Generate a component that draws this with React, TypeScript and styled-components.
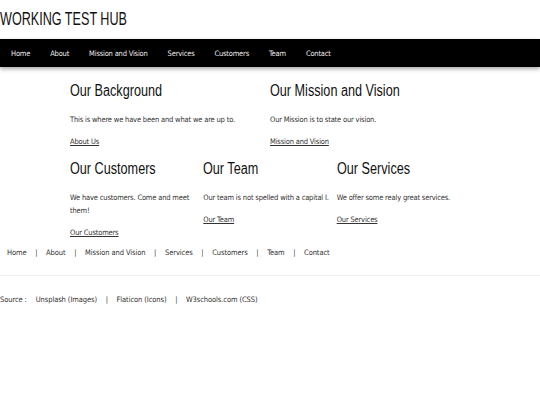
import React from "react";
import styled, {createGlobalStyle} from "styled-components";

const GlobalStyle = createGlobalStyle`
  body {
    margin: 0;
    background: #ffffff;
    font-family: "DejaVu Sans Condensed", "DejaVu Sans", sans-serif;
  }
`;

const navItems = ["Home", "About", "Mission and Vision", "Services", "Customers", "Team", "Contact"];

const topRow = [
  {title: "Our Background", text: "This is where we have been and what we are up to.", link: "About Us"},
  {title: "Our Mission and Vision", text: "Our Mission is to state our vision.", link: "Mission and Vision"},
];

const bottomRow = [
  {title: "Our Customers", text: "We have customers. Come and meet them!", link: "Our Customers"},
  {title: "Our Team", text: "Our team is not spelled with a capital I.", link: "Our Team"},
  {title: "Our Services", text: "We offer some realy great services.", link: "Our Services"},
];

const sources = ["Unsplash (Images)", "Flaticon (Icons)", "W3schools.com (CSS)"];

function App() {
  return (
    <Page>
      <GlobalStyle />
      <Header>
        <Title>WORKING TEST HUB</Title>
      </Header>
      <Nav>
        {navItems.map((item) => (
          <NavLink key={item}>{item}</NavLink>
        ))}
      </Nav>
      <Main>
        <Row $cols={2}>
          {topRow.map((card) => (
            <Card key={card.title}>
              <CardTitle>{card.title}</CardTitle>
              <CardText>{card.text}</CardText>
              <CardLink>{card.link}</CardLink>
            </Card>
          ))}
        </Row>
        <Row $cols={3}>
          {bottomRow.map((card) => (
            <Card key={card.title}>
              <CardTitle>{card.title}</CardTitle>
              <CardText>{card.text}</CardText>
              <CardLink>{card.link}</CardLink>
            </Card>
          ))}
        </Row>
      </Main>
      <FooterNav>
        {navItems.map((item, index) => (
          <React.Fragment key={item}>
            {index > 0 && <Sep>|</Sep>}
            <FooterLink>{item}</FooterLink>
          </React.Fragment>
        ))}
      </FooterNav>
      <Sources>
        <SourceLabel>Source :</SourceLabel>
        {sources.map((item, index) => (
          <React.Fragment key={item}>
            {index > 0 && <Sep>|</Sep>}
            <FooterLink>{item}</FooterLink>
          </React.Fragment>
        ))}
      </Sources>
    </Page>
  );
}

export default App;

const Page = styled.div`
  width: 540px;
  min-height: 405px;
  background: #ffffff;
`;

const Header = styled.header`
  height: 39px;
  display: flex;
  align-items: center;
`;

const Title = styled.h1`
  margin: 0;
  display: inline-block;
  font-family: "Liberation Sans", Arial, sans-serif;
  font-weight: 400;
  font-size: 18px;
  color: #111;
  transform: scaleX(0.7);
  transform-origin: left center;
`;

const Nav = styled.nav`
  height: 28px;
  background: #000;
  display: flex;
  align-items: center;
  padding-left: 1px;
  box-shadow: 0 2px 4px rgba(0, 0, 0, 0.35);
`;

const NavLink = styled.span`
  padding: 0 10px;
  color: #ececec;
  font-size: 7.5px;
  letter-spacing: -0.2px;
`;

const Main = styled.main`
  width: 400px;
  margin: 0 auto;
  padding-top: 14px;
`;

const Row = styled.div<{$cols: number}>`
  display: grid;
  grid-template-columns: repeat(${(p) => p.$cols}, 1fr);
  margin-bottom: 7px;

  & + & {
    margin-top: 11px;
  }
`;

const Card = styled.section`
  display: flex;
  flex-direction: column;
  align-items: flex-start;
`;

const CardTitle = styled.h2`
  margin: 0 0 12px;
  font-family: "Liberation Sans", Arial, sans-serif;
  font-weight: 400;
  font-size: 16px;
  line-height: 20px;
  color: #111;
  transform: scaleX(0.79);
  transform-origin: left center;
  white-space: nowrap;
`;

const CardText = styled.p`
  margin: 0 0 9px;
  padding-right: 4px;
  font-size: 7.5px;
  letter-spacing: -0.18px;
  line-height: 13px;
  color: #333;
`;

const CardLink = styled.a`
  font-size: 7.5px;
  letter-spacing: -0.18px;
  line-height: 13px;
  color: #333;
  text-decoration: underline;
`;

const FooterNav = styled.div`
  display: flex;
  align-items: center;
  line-height: 13px;
  padding: 0 0 16px 7px;
  border-bottom: 1px solid #f0f0f0;
  font-size: 7.5px;
  letter-spacing: -0.1px;
  color: #333;
`;

const FooterLink = styled.span`
  color: #333;
`;

const Sep = styled.span`
  padding: 0 8.7px;
  color: #333;
`;

const Sources = styled.div`
  display: flex;
  align-items: center;
  line-height: 13px;
  padding: 17px 0 0 0;
  font-size: 7.5px;
  letter-spacing: -0.1px;
  color: #333;
`;

const SourceLabel = styled.span`
  margin-right: 9px;
`;
